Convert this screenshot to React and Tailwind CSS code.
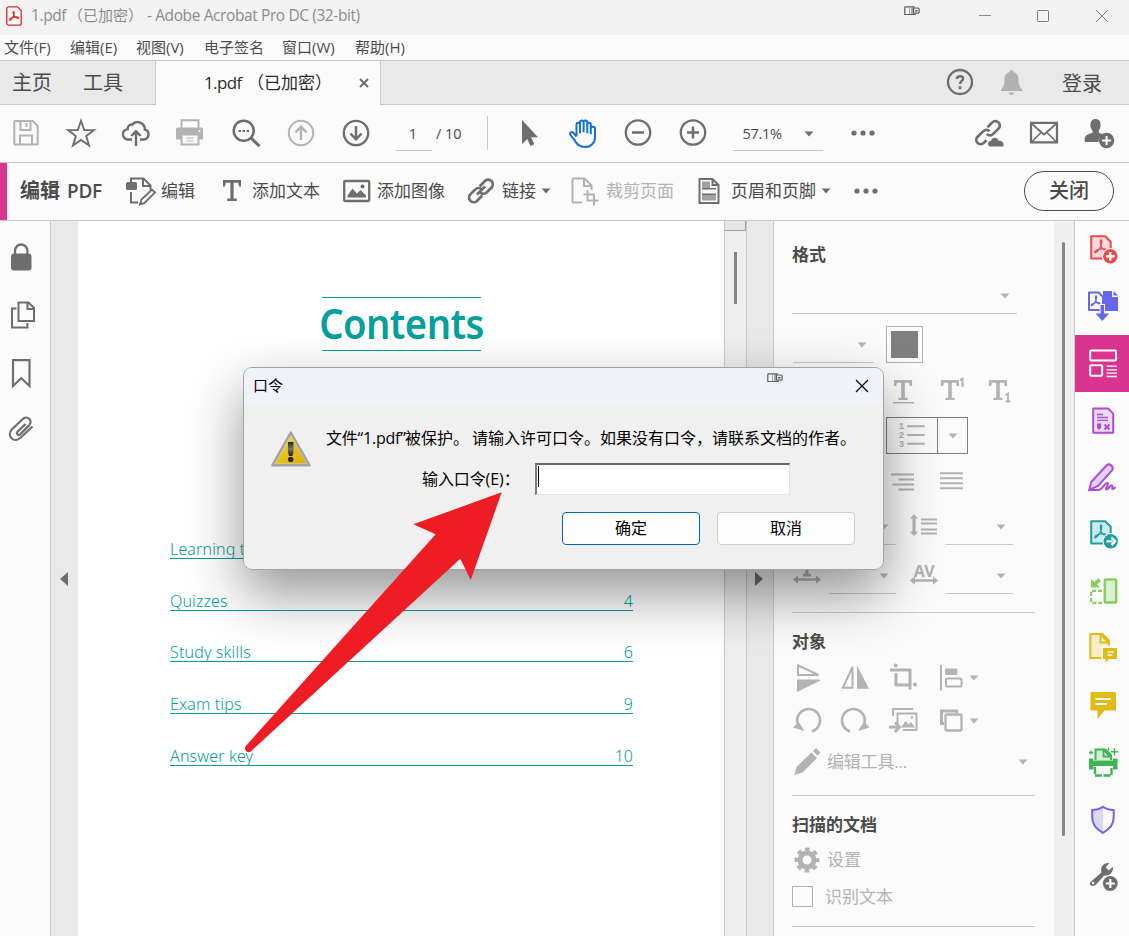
const MENU = [
  { label: '文件(F)', width: 'w-[66px]' },
  { label: '编辑(E)', width: 'w-[66px]' },
  { label: '视图(V)', width: 'w-[68px]' },
  { label: '电子签名', width: 'w-[78px]' },
  { label: '窗口(W)', width: 'w-[73px]' },
  { label: '帮助(H)', width: 'w-[60px]' },
];

const TOC = [
  { title: 'Learning tips', page: '' },
  { title: 'Quizzes', page: '4' },
  { title: 'Study skills', page: '6' },
  { title: 'Exam tips', page: '9' },
  { title: 'Answer key', page: '10' },
];

function Icon({ className = '', width = 2, children }) {
  return (
    <svg
      viewBox="0 0 28 28"
      className={`size-7 shrink-0 overflow-visible ${className}`}
      fill="none"
      stroke="currentColor"
      strokeWidth={width}
    >
      {children}
    </svg>
  );
}

function Caret({ className = '' }) {
  return (
    <svg viewBox="0 0 10 6" className={`h-[6px] w-[10px] shrink-0 ${className}`} fill="currentColor">
      <path d="M.6 .5h8.8L5 5.6z" />
    </svg>
  );
}

function Dots({ className = '' }) {
  return (
    <svg viewBox="0 0 24 28" className={`h-7 w-6 shrink-0 ${className}`} fill="currentColor">
      <circle cx="3" cy="14" r="2.6" />
      <circle cx="12" cy="14" r="2.6" />
      <circle cx="21" cy="14" r="2.6" />
    </svg>
  );
}

function Widget({ className = '' }) {
  return (
    <svg viewBox="0 0 16 10" className={`h-[10px] w-4 ${className}`} fill="none" stroke="#5f5f5f">
      <path d="M.8 .8h10M.8 .8v7.7h11" strokeWidth="1.2" />
      <path d="M5.5 1v7M7.5 1v7" stroke="#a5a5a5" />
      <path d="M9 1v7.5" />
      <rect x="9.5" y="2" width="5.6" height="5.2" rx="1" strokeWidth="1.2" />
      <path d="M11 4.8h2.6" strokeWidth="1.4" />
    </svg>
  );
}

function TitleBar() {
  return (
    <div className="flex h-[35px] items-start bg-[#f3f3f3] text-[15px] leading-[31px] text-[#8c8c8c]">
      <svg viewBox="0 0 16 20" className="mt-[6px] ml-[6px] h-5 w-4 shrink-0" fill="none" stroke="#e5252a">
        <path d="M2.8 .8h8.6l3.8 3.8v12.6a2 2 0 0 1-2 2H2.8a2 2 0 0 1-2-2V2.8a2 2 0 0 1 2-2z" fill="#fff" strokeWidth="1.3" />
        <path d="M7.5 5.5c1.3 0 .6 3.6-1 6.3-1.1 2-2.6 2.900-3 2.200-.5-1 2.300-2.500 4.900-2.900 2.500-.4 4.700.1 4.300.9-.6 1-3.400-.2-4.700-2.400-.9-1.600-1.500-4.100-.5-4.100z" strokeWidth="1.2" />
      </svg>
      <span className="ml-[9px] w-[37px] shrink-0 text-[15.5px] tracking-[-0.4px] whitespace-nowrap">1.pdf</span>
      <span className="w-[75px] shrink-0 whitespace-nowrap">（已加密）</span>
      <span className="ml-[4px] shrink-0 text-[15.5px] tracking-[-0.4px] whitespace-nowrap">- Adobe Acrobat Pro DC (32-bit)</span>
      <div className="mr-[21px] ml-auto flex">
        <Widget className="mt-[6px] mr-[59px]" />
        <svg viewBox="0 0 12 12" className="mt-[10px] mr-[46px] size-3" stroke="#8a8a8a">
          <path d="M0 5.5h12" />
        </svg>
        <svg viewBox="0 0 12 12" className="mt-[10px] mr-[47px] size-3" stroke="#7d7d7d" fill="none">
          <rect x=".5" y=".5" width="11" height="11" rx="1" />
        </svg>
        <svg viewBox="0 0 12 12" className="mt-[10px] size-3" stroke="#7d7d7d">
          <path d="M0 0l12 12M12 0L0 12" />
        </svg>
      </div>
    </div>
  );
}

function TabBar() {
  return (
    <div className="flex h-[45px] border-t border-[#c8c8c8] bg-[#e9e9e9] text-[#4b4b4b]">
      <div className="flex w-[156px] gap-[31px] border-r border-b border-[#c8c8c8] pl-3 text-[20px] leading-[43px]">
        <span>主页</span>
        <span>工具</span>
      </div>
      <div className="flex w-[224px] items-center bg-[#fbfbfb] pl-[48px] text-[17px] text-[#2c2c2c]">
        <span className="w-[43px] tracking-[-0.6px]">1.pdf</span>
        <span className="w-[85px]">（已加密）</span>
        <svg viewBox="0 0 10 10" className="ml-[27px] size-[10px]" stroke="#6e6e6e" strokeWidth="2">
          <path d="M1 1l8 8M9 1L1 9" />
        </svg>
      </div>
      <div className="flex flex-1 items-start justify-end border-b border-l border-[#c8c8c8] pt-[7px] pr-[27px]">
        <Icon className="text-[#6e6e6e]" width={2.3}>
          <circle cx="14" cy="14" r="12" />
          <path d="M10.8 10.8c.3-3.600 6.600-3.500 6.300.1-.2 2-3.100 2.200-3.100 5.100" strokeWidth="2.5" />
          <circle cx="14" cy="19.8" r=".6" />
        </Icon>
        <Icon className="ml-[24px] text-[#b1b1b1]" width={0}>
          <path
            fill="currentColor"
            d="M13.5 2c1.300 0 2 .8 2 2 3.800 1 5 4 5 8 0 5 1.500 7.500 3.700 9.500V23H3v-1.500C5 19.500 6.500 17 6.500 12c0-4 1.300-7 5-8 0-1.200.7-2 2-2zM10.500 24.500h6c-.4 1.700-1.500 2.500-3 2.500s-2.600-.8-3-2.500z"
          />
        </Icon>
        <span className="ml-[36px] text-[20px] leading-8">登录</span>
      </div>
    </div>
  );
}

function Toolbar() {
  return (
    <div className="flex h-[58px] items-start border-b border-[#c8c8c8] pt-[14px] pr-4 pl-3 text-[#6e6e6e]">
      <div className="flex gap-[27px]">
        <Icon className="text-[#b3b3b3]">
          <path d="M2.3 3a1 1 0 0 1 1-1h17.4l5 5v17.5a1 1 0 0 1-1 1H3.3a1 1 0 0 1-1-1zM8.5 2v9h10V2M14.500 4v4M8 25v-8.500h12V25" />
        </Icon>
        <Icon width={1.9}>
          <path d="M14 1.8l3.200 9.200 9.800.1-7.800 6 2.800 9.400-8-5.600-8 5.600 2.800-9.400-7.800-6 9.800-.1z" />
        </Icon>
        <Icon width={2.4}>
          <path d="M10 20.500H6.500a5.200 5.200 0 0 1-.8-10.400 4 4 0 0 1 4.500-4.500 7.200 7.200 0 0 1 12.600 4.900 5.100 5.100 0 0 1-1 10H18M14 27V12.500M9.300 17l4.700-4.700 4.700 4.700" />
        </Icon>
        <Icon className="text-[#b3b3b3]">
          <path d="M4.500 9V1.300h17V9" />
          <path d="M-1 10a1.500 1.500 0 0 1 1.500-1.500h24A1.500 1.500 0 0 1 26 10v10.500H-1z" fill="currentColor" stroke="none" />
          <path d="M4.500 15.500h17v10h-17z" fill="#fbfbfb" />
          <path d="M9.500 19h7M9.500 22h7" strokeWidth="1.2" />
          <circle cx="22.500" cy="12" r="1" fill="#fbfbfb" stroke="none" />
        </Icon>
        <Icon width={2.5}>
          <circle cx="11.700" cy="11.800" r="10" />
          <path d="M18.500 18.500l9 8.800" strokeWidth="3" />
          <path d="M6.500 12H9M10.500 12h2.500M14.600 12h2.500" strokeWidth="2.2" />
        </Icon>
        <Icon className="text-[#b3b3b3]">
          <circle cx="14" cy="14" r="12.2" />
          <path d="M14 21V8M8.500 13.300L14 7.700l5.500 5.600" strokeWidth="2.500" />
        </Icon>
        <Icon width={2.3}>
          <circle cx="14" cy="14" r="12.2" />
          <path d="M14 7v13M8.500 14.700l5.500 5.600 5.500-5.600" strokeWidth="2.5" />
        </Icon>
      </div>
      <div className="ml-[26px] h-[32px] w-[36px] border-b border-[#c8c8c8] pr-[2px] text-center text-[14.5px] leading-[29px] text-[#4b4b4b]">
        1
      </div>
      <span className="ml-[4px] w-[51px] text-[14.5px] leading-[29px] whitespace-nowrap text-[#4b4b4b]">/ 10</span>
      <div className="-mt-[3px] h-[34px] w-px bg-[#c8c8c8]" />
      <div className="ml-[27px] flex gap-[26.5px]">
        <Icon width={0}>
          <path d="M7 1v24l5.200-5 3.300 7 3.800-1.700-3.200-7H23z" fill="currentColor" />
        </Icon>
        <Icon className="text-[#1473d2]">
          <path
            transform="translate(-1 .3)"
            d="M7.500 17V5.300a1.700 1.700 0 0 1 3.500 0V14M11 11V3a1.700 1.700 0 0 1 3.600 0v10M14.600 11V3a1.700 1.700 0 0 1 3.700 0v11M18.300 12V5.300a1.700 1.700 0 0 1 3.500 0V15M21.800 11V9.500a2 2 0 0 1 4.200 0V18c0 6-4.500 9.800-10.500 9.800-5.500 0-8-3-10.200-7.300L1.300 15.500c-1-2.200 1.600-3.800 3.200-2l3 3.800"
            strokeWidth="2"
          />
        </Icon>
        <Icon width={2.3}>
          <circle cx="14" cy="13.500" r="12.2" />
          <path d="M8 13.500h12" strokeWidth="2.5" />
        </Icon>
        <Icon width={2.3}>
          <circle cx="14" cy="13.500" r="12.2" />
          <path d="M8 13.500h12M14 7.500v12" strokeWidth="2.5" />
        </Icon>
      </div>
      <div className="ml-[26px] flex h-[32px] w-[90px] border-b border-[#c8c8c8] pl-[10px] text-[14.5px] leading-[29px] text-[#4b4b4b]">
        <span className="w-[61px] tracking-[-0.3px]">57.1%</span>
        <Caret className="mt-[12px] text-[#6e6e6e]" />
      </div>
      <Dots className="ml-7" />
      <div className="ml-auto flex gap-[27px]">
        <Icon width={2.7}>
          <path d="M12.500 8.200l4.800-4.800a4.300 4.300 0 0 1 6.200 6.200l-5.600 5.500a4.300 4.300 0 0 1-6.100 0M11.500 21.200l-2.700 2.700a4.300 4.300 0 0 1-6.200-6.200l5.800-5.600a4.300 4.300 0 0 1 6.100 0" />
          <path d="M14 27.500c-2.300-4 .3-5.800 2-5.500.8-4 6.500-4.300 7.500-.2 3.500-.6 6 2 4.700 5.700z" fill="currentColor" stroke="none" />
        </Icon>
        <Icon>
          <path d="M1 3.800h26v19.600H1z" strokeWidth="2.2" />
          <path d="M2 5l12 10.500L26 5M2 22.500l9-9M26 22.500l-9-9" strokeWidth="1.7" />
        </Icon>
        <Icon width={0}>
          <path d="M10.500 0c4 0 5.500 3 5 7-.3 2.500-1.300 4-2 5 0 1.500 1 2.300 5 3.800-3.500 1.700-5 3.800-5 7.200H0c-1.500-6 2-7.500 5.500-8.500 1.500-.5 2.200-1 2.200-2.500C4 8 4.500 0 10.500 0z" fill="currentColor" />
          <circle cx="21.600" cy="21.500" r="7.700" fill="currentColor" />
          <path d="M21.600 17v9M17.100 21.500h9" stroke="#fbfbfb" strokeWidth="2" />
        </Icon>
      </div>
    </div>
  );
}

function EditBar() {
  return (
    <div className="flex h-[58px] items-center border-b border-[#c8c8c8] pr-[15px] pb-px text-[17px] whitespace-nowrap text-[#4b4b4b]">
      <div className="h-[57px] w-[7px] shrink-0 self-start bg-[#da358e]" />
      <span className="ml-[13px] w-[106px] shrink-0 text-[20px] font-semibold">
        编辑<span className="ml-[7px] text-[19px] tracking-[-0.3px]">PDF</span>
      </span>
      <Icon className="text-[#6e6e6e]">
        <path d="M5 5V1.500h12.500l7 7V13M17 2v7h7M5 15v10.500h7" />
        <rect x="0" y="5" width="11" height="8" rx="1.500" fill="currentColor" stroke="none" />
        <path d="M14 27.500l1.500-5L26 12.500l3 3-10.500 10.500z" fill="#fbfbfb" strokeWidth="1.9" />
      </Icon>
      <span className="ml-[7px] w-[34px]">编辑</span>
      <Icon className="ml-[23px] text-[#6e6e6e]" width={0}>
        <path d="M5 3h18v6.500h-2l-.8-3.700h-4.600V21.500h3.200V24H9.200v-2.500h3.200V5.800H7.800L7 9.500H5z" fill="currentColor" />
      </Icon>
      <span className="ml-[6px] w-[68px]">添加文本</span>
      <Icon className="ml-[23px] text-[#6e6e6e]" width={2.3}>
        <rect x="1.200" y="4" width="25" height="20" rx="1" />
        <path d="M4.500 20.500v-2l5-7 4.500 5 3.500-3.500 5.500 5.500v2z" fill="currentColor" stroke="none" />
        <circle cx="19.500" cy="9.500" r="2" fill="currentColor" stroke="none" />
      </Icon>
      <span className="ml-[6px] w-[68px]">添加图像</span>
      <Icon className="ml-[22px] text-[#6e6e6e]" width={2.7}>
        <path d="M12.600 9.500l5.600-5.800a4.700 4.700 0 0 1 6.600 6.600l-5 5a4.700 4.700 0 0 1-6.600.2M15.300 18.500l-5.600 5.700a4.700 4.700 0 0 1-6.600-6.600l5-5a4.700 4.700 0 0 1 6.600-.2M10 17.500l8-8" />
      </Icon>
      <span className="ml-[7px] w-[34px]">链接</span>
      <Caret className="ml-[5px] text-[#6e6e6e]" />
      <Icon className="ml-[20px] text-[#b3b3b3]">
        <path d="M11 25.500H2.500a1 1 0 0 1-1-1v-22a1 1 0 0 1 1-1H13.500l7 7V13M13 2v7h7M12.500 17.500h10.500v11M16.500 13v10.500h11" />
      </Icon>
      <span className="ml-[7px] w-[68px] text-[#b3b3b3]">裁剪页面</span>
      <Icon className="ml-[21px] text-[#6e6e6e]">
        <path d="M4.500 2h13l6 6v18h-19zM17.500 2v6h6" />
        <path d="M7 4.500h8V11H7zM7 18h14v5.500H7z" fill="#a2a2a2" stroke="none" />
        <path d="M7 11.800h14M7 17.200h14" strokeWidth="1.5" />
      </Icon>
      <span className="ml-[8px] w-[85px]">页眉和页脚</span>
      <Caret className="ml-[5px] text-[#6e6e6e]" />
      <Dots className="ml-[23px] text-[#6e6e6e]" />
      <button className="ml-auto h-10 w-[90px] rounded-full border-[1.5px] border-[#4b4b4b] text-[20px] leading-[36px] font-medium">
        关闭
      </button>
    </div>
  );
}

function LeftRail() {
  return (
    <div className="flex w-[51px] shrink-0 flex-col gap-[30px] border-r border-[#c8c8c8] bg-[#fbfbfb] pt-[22px] pl-2 text-[#6e6e6e]">
      <Icon>
        <rect x="3" y="10.500" width="20.500" height="17" rx="3" fill="currentColor" stroke="none" />
        <path d="M7 12V7.700a6.200 6.200 0 0 1 12.400 0V12" strokeWidth="2.3" />
      </Icon>
      <Icon>
        <path d="M10.500 1.500h10l5.500 5.500V20H10.500zM19.500 1.500V8H26M8.500 7.500H4v19h15.500V22" />
      </Icon>
      <Icon width={2.2}>
        <path d="M5 1.200h16.500V27l-8.200-7.700L5 27z" />
      </Icon>
      <Icon className="-mt-[2px]" width={2.2}>
        <path d="M17.500 9l-8 7.800c-1.600 1.800.8 4.300 2.600 2.600L21 10.500c4.600-5-1.700-11-6.500-6.300L4 14.300c-6 6.500 2 14.500 8.500 8.500L24.500 11.500" />
      </Icon>
    </div>
  );
}

function DocumentPane() {
  return (
    <div className="flex flex-1 bg-[#e9e9e9]">
      <div className="flex w-[27px] shrink-0 items-start pt-[351px] pl-[9px]">
        <svg viewBox="0 0 8 14" className="h-[14px] w-2" fill="#6e6e6e">
          <path d="M8 0v14L0 7z" />
        </svg>
      </div>
      <div className="w-[646px] shrink-0 bg-white pt-[76px] pl-[92px] font-['Noto_Sans',sans-serif] text-[#05a09b]">
        <h1 className="ml-[152px] flex h-[54px] w-[159px] justify-center border-y border-[#05a09b] text-[42px] leading-[49px] font-semibold tracking-[-0.6px]">
          <span className="scale-x-[0.91]">Contents</span>
        </h1>
        <ul className="mt-[156px] w-[463px] text-[16px] leading-[18px] font-light">
          {TOC.map((row) => (
            <li key={row.title} className="flex h-[51.8px] items-end justify-between border-b border-[#05a09b]">
              <span className="tracking-[0.15px]">{row.title}</span>
              <span>{row.page}</span>
            </li>
          ))}
        </ul>
      </div>
      <div className="flex w-[23px] shrink-0 flex-col border-x border-[#c8c8c8] bg-[#efefef]">
        <div className="h-[10px] border-r border-b border-[#a0a0a0] bg-[#e6e6e6]" />
        <div className="mt-[21px] ml-[9px] h-[52px] w-[3px] bg-[#858585]" />
      </div>
      <div className="flex flex-1 items-start border-r border-[#c8c8c8] pt-[351px] pl-[8px]">
        <svg viewBox="0 0 8 14" className="h-[14px] w-2" fill="#6e6e6e">
          <path d="M0 0v14l8-7z" />
        </svg>
      </div>
    </div>
  );
}

function Field({ className = '' }) {
  return (
    <div className={`flex justify-end border-b border-[#c8c8c8] pr-[7px] ${className}`}>
      <Caret />
    </div>
  );
}

const T_PATH = 'M5 3h18v6h-2.200l-.7-3.300h-4.300v15h2.800V23H9.400v-2.300h2.800v-15H7.900L7.200 9H5z';

function FormatPanel() {
  return (
    <div className="w-[280px] shrink-0 bg-[#fbfbfb] pl-[18px] text-[17px] text-[#b3b3b3]">
      <h2 className="h-[72px] leading-[68px] font-bold text-[#4b4b4b]">格式</h2>
      <Field className="h-[21px] w-[225px]" />
      <div className="mt-3 flex h-[37px]">
        <Field className="ml-px w-[81px] pt-[16px]" />
        <div className="ml-[12px] flex size-[37px] items-center justify-center border border-[#b1b1b1]">
          <div className="size-[27px] bg-[#808080]" />
        </div>
      </div>
      <div className="mt-[14px] ml-[97px] flex gap-5">
        <Icon width={0}>
          <path d={T_PATH} fill="currentColor" />
          <path d="M4 25.700h21" strokeWidth="1.5" />
        </Icon>
        <Icon className="-ml-px" width={0}>
          <path d={T_PATH} fill="currentColor" />
          <path d="M24 3.200l2.500-1.500V10" strokeWidth="2" />
        </Icon>
        <Icon width={0}>
          <path d={T_PATH} fill="currentColor" />
          <path d="M21.500 18.200l2.500-1.500V25M21.500 24.500h5" strokeWidth="1.8" />
        </Icon>
      </div>
      <div className="mt-[12px] ml-[94px] flex h-[37px] w-[82px] items-center border border-[#7d7d7d]">
        <div className="flex h-full w-[51px] border-r border-[#7d7d7d] pl-[12px]">
          <div className="flex w-[6px] flex-col pt-[4px] font-['Liberation_Sans',sans-serif] text-[9px] leading-[9px] font-bold">
            <span>1</span>
            <span>2</span>
            <span>3</span>
          </div>
          <svg viewBox="0 0 18 36" className="ml-[2px] h-[35px] w-[18px]" stroke="currentColor" strokeWidth="2">
            <path d="M0 8.500h18M0 17.500h18M0 26.500h18" />
          </svg>
        </div>
        <Caret className="ml-[10px]" />
      </div>
      <div className="mt-[13px] ml-[97px] flex gap-[21px]">
        <Icon className="mt-px">
          <path d="M2 6.500h23M9.500 11.500H25M3.500 16.500H25M9.500 21.500H25" />
        </Icon>
        <Icon>
          <path d="M2 6.200h23M2 11.200h23M2 16.200h23M2 21.200h23" />
        </Icon>
      </div>
      <div className="mt-[16px] flex h-[33px]">
        <Field className="ml-[37px] w-[67px] pt-[12px]" />
        <Icon className="ml-[14px]">
          <path d="M4 4v18" strokeWidth="3" />
          <path d="M0 6.500l4-4.200 4 4.200zM0 19.800l4 4.200 4-4.200z" fill="currentColor" stroke="none" />
          <path d="M11 7.500h16M11 11.500h16M11 17.500h16M11 21.500h16" />
        </Icon>
        <Field className="ml-[8px] w-[67px] pt-[12px]" />
      </div>
      <div className="mt-[16px] flex h-[33px]">
        <Icon className="ml-px">
          <path d="M14 0v14M10 14h8" strokeWidth="3" />
          <path d="M3 18.500h22" strokeWidth="2.5" />
          <path d="M5 14.300v8.400L0 18.500zM23 14.300v8.400l5-4.200z" fill="currentColor" stroke="none" />
        </Icon>
        <Field className="ml-[8px] w-[67px] pt-[12px]" />
        <div className="ml-[14px] flex w-7 flex-col items-center">
          <span className="h-[14px] font-['Open_Sans',sans-serif] text-[16px] leading-[21px] font-bold tracking-[-0.5px]">AV</span>
          <svg viewBox="0 0 28 10" className="h-[10px] w-7" fill="currentColor">
            <path d="M0 5.500l5-4.200v3h18v-3l5 4.200-5 4.200v-3H5v3z" />
          </svg>
        </div>
        <Field className="ml-[8px] w-[67px] pt-[12px]" />
      </div>
      <hr className="mt-[18px] w-[243px] border-[#c8c8c8]" />

      <h2 className="h-[51px] leading-[58px] font-bold text-[#4b4b4b]">对象</h2>
      <div className="ml-px flex items-center">
        <Icon>
          <path d="M5 1.300v9.700h20.500z" />
          <path d="M4 15.500h23v1.200L4 28z" fill="currentColor" stroke="none" />
        </Icon>
        <Icon className="ml-5">
          <path d="M11.500 3v20.800H1.800z" />
          <path d="M16 1.500v23.300h12z" fill="currentColor" stroke="none" />
        </Icon>
        <Icon className="ml-5" width={3}>
          <path d="M1 6h20v19.500M7 9v12h13" />
          <circle cx="6.700" cy="1.500" r="1" strokeWidth="2" />
          <circle cx="26" cy="20.500" r="1" strokeWidth="2" />
        </Icon>
        <Icon className="ml-5">
          <path d="M4 1v25.500" />
          <rect x="8" y="4.500" width="12.500" height="6.500" rx="1" fill="currentColor" stroke="none" />
          <rect x="9" y="14.500" width="15.500" height="8" rx="1" />
        </Icon>
        <Caret className="ml-[4px]" />
      </div>
      <div className="mt-[15px] ml-px flex items-center">
        <Icon width={2.5}>
          <path d="M19 24.500a11.500 11.500 0 1 0-14.500-8" />
          <path d="M0 20.500l5.500-5.800 6 9.300z" fill="currentColor" stroke="none" />
        </Icon>
        <Icon className="ml-5" width={2.5}>
          <path d="M9 24.500a11.500 11.500 0 1 1 14.500-8" />
          <path d="M28.500 20.500l-5.500-5.800-6 9.300z" fill="currentColor" stroke="none" />
        </Icon>
        <Icon className="ml-5">
          <path d="M4 9V2h20M8.500 17V6.500h19V23H14" />
          <path d="M12 20.500l4.500-6.500 3 3.500 2.500-2.500 4 5.500z" fill="currentColor" stroke="none" />
          <path d="M0 20h8M6 15.500l4.500 4.500L6 25" strokeWidth="2.8" />
          <circle cx="23" cy="10.500" r="1.300" fill="currentColor" stroke="none" />
        </Icon>
        <Icon className="ml-5">
          <path d="M7 16.500H4.500V4h15v2" strokeWidth="3" />
          <rect x="8.500" y="7.500" width="16" height="16" rx="1" strokeWidth="2.3" />
        </Icon>
        <Caret className="ml-[4px]" />
      </div>
      <div className="mt-[13px] ml-px flex items-center">
        <Icon width={0}>
          <path d="M1.500 27l2-8L18.500 4.500l5.500 5.500L9.500 24.500zM20 3l3-3 4.500 4.500-3 3z" fill="currentColor" />
        </Icon>
        <span className="ml-[6px] w-[191px] tracking-[-0.2px]">编辑工具...</span>
        <Caret />
      </div>
      <hr className="mt-[19px] w-[243px] border-[#c8c8c8]" />

      <h2 className="h-[50px] leading-[57px] font-bold text-[#4b4b4b]">扫描的文档</h2>
      <div className="ml-px flex items-center">
        <Icon>
          <circle cx="14" cy="14" r="7" strokeWidth="5" />
          <circle cx="14" cy="14" r="10.500" strokeWidth="4" strokeDasharray="4.5 3.747" strokeDashoffset="2.250" />
        </Icon>
        <span className="ml-[6px]">设置</span>
      </div>
      <div className="mt-[12px] flex h-[21px] items-center">
        <div className="size-[21px] border border-[#b3b3b3]" />
        <span className="ml-[12px]">识别文本</span>
      </div>
      <hr className="mt-[19px] w-[243px] border-[#c8c8c8]" />
    </div>
  );
}

const ACROBAT = 'M14 6c1.500 0 1 4-1.500 8.500C11 17 8.500 19.500 7.800 18.500c-.8-1.200 3-3.300 6-3.700 3-.4 5.800.2 5.300 1.100-.8 1.200-3.500-.5-4.700-3C13.200 10 13 6 14 6z';

const TOOLS = [
  {
    name: 'create',
    color: 'text-[#eb4850]',
    art: (
      <>
        <path d="M4.200 2.200h14l5.500 5.500v16.800H4.200z" fill="#f8dadb" strokeLinejoin="round" />
        <path d={ACROBAT} strokeWidth="1.3" />
        <circle cx="23.300" cy="22.300" r="8.300" fill="#fbfbfb" stroke="none" />
        <circle cx="23.300" cy="22.300" r="7.200" fill="currentColor" stroke="none" />
        <path d="M23.300 18v8.600M19 22.300h8.600" stroke="#fff" strokeWidth="2.4" />
      </>
    ),
  },
  {
    name: 'combine',
    color: 'text-[#6767ec]',
    art: (
      <>
        <path d="M16 0h9v6h6v14H16z" fill="currentColor" stroke="none" />
        <path d="M26.500 0v4.500H31z" fill="currentColor" stroke="none" />
        <path d="M2 1.500h9.500l4.500 4.500v13H2z" fill="#fbfbfb" strokeLinejoin="round" />
        <path d={ACROBAT} strokeWidth="1.8" transform="translate(-1.500 .5) scale(.75)" />
        <path d="M12.500 13h5.500v8h5l-7.800 9L7.500 21h5z" fill="#fbfbfb" stroke="none" />
        <path d="M15.300 14v12" strokeWidth="3.5" />
        <path d="M8.500 22.500h13.600L15.300 30z" fill="currentColor" stroke="none" />
      </>
    ),
  },
  {
    name: 'edit',
    color: 'bg-[#da358e] text-white',
    art: (
      <>
        <rect x="3.200" y="2.500" width="25.800" height="10" rx="1" />
        <rect x="3.200" y="17.300" width="12" height="10.500" rx="1" />
        <path d="M19.500 18.200H30M19.500 21.800H30M19.500 25.200H30M19.500 28.500H30" strokeWidth="1.3" />
      </>
    ),
  },
  {
    name: 'form',
    color: 'text-[#b04bd8]',
    art: (
      <>
        <path d="M6.200 3.400h14.800l5.200 5.200V27.800H6.200z" fill="#eadcf3" strokeLinejoin="round" />
        <path d="M10 9.500h6M10 12.500h11M10 15.300h11" strokeWidth="1.3" />
        <path d="M10 18.500h4.200v4L12 25l-2-2.500z" fill="currentColor" stroke="none" />
        <path d="M17.500 19.500l5 5M22.500 19.500l-5 5" />
      </>
    ),
  },
  {
    name: 'sign',
    color: 'text-[#b04bd8]',
    art: (
      <>
        <path d="M2.200 28l2-8L19.500 3.500c3-3 8 1.300 5.500 4.800L11 24z" fill="#dcd5f5" />
        <path d="M2 28h9.500c4 0 6.500-8 9-7 2 .8-3 6.500-.8 6.500 2 0 3-4.500 5-4s-.5 3.500 1 3.500 1.500-1.500 3-1.500" />
      </>
    ),
  },
  {
    name: 'export',
    color: 'text-[#209e9d]',
    art: (
      <>
        <path d="M4.200 2.200h14l5.500 5.500v16.800H4.200z" fill="#cdebec" strokeLinejoin="round" />
        <path d={ACROBAT} strokeWidth="1.3" />
        <circle cx="23.700" cy="22.300" r="8.300" fill="#fbfbfb" stroke="none" />
        <circle cx="23.700" cy="22.300" r="7.200" fill="currentColor" stroke="none" />
        <path d="M19.500 22.300h6M24.500 18.500l3.600 3.800-3.600 3.800" stroke="#fff" strokeWidth="2.3" />
      </>
    ),
  },
  {
    name: 'organize',
    color: 'text-[#86cf5c]',
    art: (
      <>
        <rect x="17.800" y="3.500" width="11.400" height="23" rx="1" fill="#dceed4" strokeWidth="2.5" />
        <path d="M15 14.800H4.200v12H15" strokeDasharray="4 2" strokeWidth="2.2" />
        <path d="M4 3v8.500h9L9.800 8.600 14 5.200 11.500 2.200 7.500 6z" fill="currentColor" stroke="none" />
      </>
    ),
  },
  {
    name: 'send',
    color: 'text-[#e0ba15]',
    art: (
      <>
        <path d="M3.300 1h12l6.500 6.500v17.500H3.300z" fill="#f6ecc8" strokeLinejoin="round" />
        <path d="M13.500 1.500v8h8z" fill="#fbfbfb" />
        <path d="M14.500 12.500H32v15H14.500z" fill="#fbfbfb" stroke="none" />
        <path d="M16 15h14v11h-8l-3.500 3.500V26H16z" fill="currentColor" stroke="none" />
        <path d="M20.500 19h6M20.500 22h5" stroke="#fff" strokeWidth="1.3" />
      </>
    ),
  },
  {
    name: 'comment',
    color: 'text-[#e0ba15]',
    art: (
      <>
        <path d="M5 2h22.500A1.500 1.500 0 0 1 29 3.500v17H17.500L10.500 29v-8.500h-7v-17A1.500 1.500 0 0 1 5 2z" fill="currentColor" stroke="none" />
        <path d="M8.500 9h15.500M8.500 14h11.500" stroke="#fff" strokeWidth="1.9" />
      </>
    ),
  },
  {
    name: 'scan',
    color: 'text-[#3fb556]',
    art: (
      <>
        <path d="M8.500 13V2.500h10l5.500 5.500v5" fill="#d5ecd5" />
        <path d="M16.500 3v6.500h7z" fill="#fbfbfb" strokeWidth="1.8" />
        <path d="M2 11.500h4v2h20v-2h4.500v11H26V19H6.500v3.500H2z" fill="currentColor" stroke="none" />
        <path d="M8 20v8.500h16.500V20" strokeDasharray="7 1.500" strokeWidth="2.3" />
        <path d="M27.500 1v7.500M23.800 4.800h7.500M21.500 .5v3M4 3.500v4M2 5.500h4" strokeWidth="1.4" />
      </>
    ),
  },
  {
    name: 'protect',
    color: 'text-[#6767ec]',
    art: (
      <>
        <path d="M16 3v26C8.500 24.500 5.300 20 5.300 13.500V6.300C9.500 6.300 13 5.300 16 3z" fill="#dcd7f5" stroke="none" />
        <path d="M15.900 2.800c3 2.200 6.500 3.200 10.800 3.300v7.400c0 6.500-3.300 11.200-10.800 15.300C8.400 24.700 5.200 20 5.200 13.500V6.100C9.500 6 12.900 5 15.900 2.800z" />
      </>
    ),
  },
  {
    name: 'more',
    color: 'text-[#6e6e6e]',
    art: (
      <>
        <path d="M4 20.500L14.500 11.500C13 6.500 16 1.500 22.500 2l-3.800 4.200 3 3.200 4.300-3.600c.7 5.700-4 9.700-8.800 8.700L9 23.500c-3.500 3.500-8.500-.2-5-3z" fill="currentColor" stroke="none" />
        <circle cx="6" cy="22" r="1.3" fill="#fff" stroke="none" />
        <circle cx="23.300" cy="22.500" r="8.500" fill="#fbfbfb" stroke="none" />
        <circle cx="23.300" cy="22.500" r="7.400" fill="currentColor" stroke="none" />
        <path d="M23.300 18v9M18.800 22.500h9" stroke="#fff" strokeWidth="2.2" />
      </>
    ),
  },
];

function ToolRail() {
  return (
    <div className="flex w-[55px] shrink-0 flex-col border-l border-[#c8c8c8] bg-[#fbfbfb]">
      {TOOLS.map((tool) => (
        <div key={tool.name} className={`h-[57px] pt-[13px] pl-3 ${tool.color}`}>
          <svg viewBox="0 0 30 31" className="h-[31px] w-[30px] overflow-visible" fill="none" stroke="currentColor" strokeWidth="2">
            {tool.art}
          </svg>
        </div>
      ))}
    </div>
  );
}

function WarningIcon() {
  return (
    <svg viewBox="0 0 40 36" className="ml-[27px] h-9 w-10 shrink-0 overflow-visible">
      <defs>
        <linearGradient id="warn" x1="0" y1="0" x2="1" y2="1">
          <stop offset="0" stopColor="#f6e04a" />
          <stop offset=".5" stopColor="#e5c31c" />
          <stop offset="1" stopColor="#d9ae10" />
        </linearGradient>
        <linearGradient id="bang" x1="0" y1="0" x2="0" y2="1">
          <stop offset="0" stopColor="#222" />
          <stop offset=".5" stopColor="#777" />
          <stop offset="1" stopColor="#1a1a1a" />
        </linearGradient>
      </defs>
      <path d="M19.800 1.500L38.500 34.300H1.300z" fill="#cfcfcf" stroke="#a3a3a3" strokeWidth="2.4" strokeLinejoin="round" />
      <path d="M19.800 5L35.500 32.500H4.300z" fill="url(#warn)" />
      <path d="M17 11h5.500v10l-1 4h-3.500l-1-4z" fill="url(#bang)" />
      <circle cx="19.700" cy="28.500" r="2.7" fill="#2a2a2a" />
    </svg>
  );
}

function PasswordDialog() {
  return (
    <div className="absolute top-[367px] left-[243px] flex h-[203px] w-[641px] flex-col overflow-hidden rounded-[9px] border border-[#a3a3a3] bg-[#f0f0f0] text-[16px] text-black">
      <div className="flex h-[37px] shrink-0 items-start bg-[#f0f2f9] pl-[9px] text-[15px] leading-[35px]">
        <span className="flex-1">口令</span>
        <Widget className="mt-[5px] mr-[73px]" />
        <svg viewBox="0 0 12 12" className="mt-[12px] mr-[15px] size-3 overflow-visible" stroke="#000" strokeWidth="1.2">
          <path d="M0 0l12 12M12 0L0 12" />
        </svg>
      </div>
      <div className="flex h-[52px] items-end">
        <div className="-mb-[10px] h-[36px]">
          <WarningIcon />
        </div>
        <p className="mb-[7px] ml-[15px] flex leading-6 whitespace-nowrap">
          <span className="w-[79px] tracking-[-0.2px]">文件“1.pdf”</span>
          <span className="w-[67px]">被保护。</span>
          <span>请输入许可口令。如果没有口令，请联系文档的作者。</span>
        </p>
      </div>
      <div className="mt-[6px] flex items-center">
        <label className="ml-[178px] flex w-[113px] tracking-[-0.1px]">输入口令(E)：</label>
        <div className="h-8 w-[255px] border-t-2 border-r border-b border-l-2 border-t-[#696969] border-r-[#e3e3e3] border-b-[#e3e3e3] border-l-[#7a7a7a] bg-white pt-px pl-[1px]">
          <div className="h-[21px] w-px bg-black" />
        </div>
      </div>
      <div className="mt-[17px] ml-[318px] flex gap-[17px]">
        <button className="h-[33px] w-[138px] rounded-[4px] border border-[#0067c0] bg-[#fdfdfd] leading-[29px]">确定</button>
        <button className="h-[33px] w-[138px] rounded-[4px] border border-[#cfcfcf] bg-[#fdfdfd] leading-[29px]">取消</button>
      </div>
    </div>
  );
}

export default function App() {
  return (
    <div className="relative flex h-[936px] w-[1129px] flex-col overflow-hidden bg-[#fbfbfb] font-['Open_Sans','Noto_Sans_CJK_SC',sans-serif]">
      <TitleBar />
      <div className="flex h-[25px] pl-1 text-[15px] leading-[25px] text-[#4b4b4b]">
        {MENU.map((item) => (
          <span key={item.label} className={`shrink-0 whitespace-nowrap ${item.width}`}>
            {item.label}
          </span>
        ))}
      </div>
      <TabBar />
      <Toolbar />
      <EditBar />
      <div className="flex h-[715px]">
        <LeftRail />
        <DocumentPane />
        <FormatPanel />
        <div className="w-5 shrink-0 bg-[#efefef] pt-[21px] pl-2">
          <div className="h-[594px] w-[3px] rounded-sm bg-[#858585]" />
        </div>
        <ToolRail />
      </div>
      <div className="absolute top-[367px] left-[243px] h-[203px] w-[641px] rounded-[9px] shadow-[0_24px_56px_rgba(0,0,0,0.42)]" />
      <PasswordDialog />
      <svg viewBox="0 0 270 270" className="absolute top-[488px] left-[240px] size-[270px]" fill="#ee1c24">
        <path d="M5.800 258L195.700 46.300l-22.400-10L261.700 4.300l-31 87.700-10.400-21.300L11 263.200a3.700 3.700 0 0 1-5.200-5.200z" />
      </svg>
    </div>
  );
}
